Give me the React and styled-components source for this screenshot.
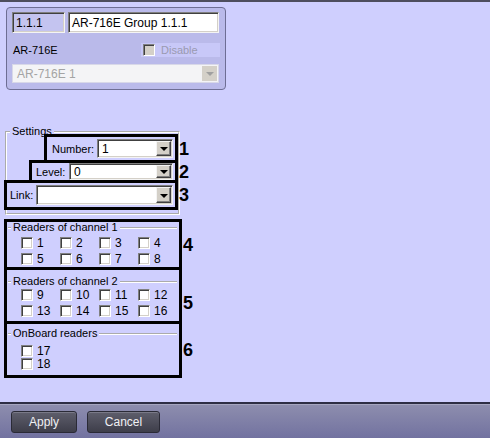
import React from 'react';
import styled, { createGlobalStyle } from 'styled-components';

const GlobalStyle = createGlobalStyle`
  * { box-sizing: border-box; }
  html, body { margin: 0; padding: 0; }
  body {
    background: #cfcffe;
    font-family: "Liberation Sans", Arial, sans-serif;
    font-size: 11px;
    color: #000;
  }
`;

const Page = styled.div`
  width: 490px;
  height: 438px;
  display: flex;
  flex-direction: column;
  border-top: 2px solid #4e4e5e;
  background: #cfcffe;
`;

const Main = styled.div`
  flex: 1;
  display: flex;
  flex-direction: column;
  align-items: flex-start;
`;

/* ---------- object panel ---------- */
const ObjectPanel = styled.div`
  margin: 5px 0 0 6px;
  width: 220px;
  height: 83px;
  padding: 4px 6px 0 5px;
  background: #babaea;
  border: 1px solid #6e6e94;
  border-radius: 4px;
  display: flex;
  flex-direction: column;
`;

const PanelRow = styled.div`
  display: flex;
  align-items: center;
  gap: ${p => p.$gap || 0}px;
  margin-top: ${p => p.$mt || 0}px;
  height: ${p => p.$h}px;
  justify-content: ${p => p.$between ? 'space-between' : 'flex-start'};
`;

const Edit = styled.div`
  width: ${p => (p.$w ? `${p.$w}px` : 'auto')};
  flex: ${p => (p.$w ? 'none' : 1)};
  height: 21px;
  padding: 0 3px;
  display: flex;
  align-items: center;
  font-size: 12px;
  background: ${p => (p.$readonly ? '#c4c4f0' : '#fff')};
  border: 1px solid;
  border-color: #808080 #f4f4f4 #f4f4f4 #808080;
  box-shadow: inset 1px 1px 0 #404040, inset -1px -1px 0 #d4d0c8;
`;

const PanelLabel = styled.span`
  font-size: 11px;
  padding-left: 1px;
`;

const DisableBox = styled.label`
  width: 79px;
  height: 14px;
  margin-right: -1px;
  background: #c8c8f8;
  display: flex;
  align-items: center;
  gap: 6px;
  padding-left: 2px;
  color: #9a9ab0;
  font-size: 11px;
`;

const Check = styled.span`
  display: inline-block;
  flex: none;
  width: 12px;
  height: 12px;
  background: ${p => (p.$disabled ? '#d4d0c8' : '#fff')};
  border: 1px solid;
  border-color: #808080 #ffffff #ffffff #808080;
  box-shadow: inset 1px 1px 0 #404040, inset -1px -1px 0 #d4d0c8;
`;

/* ---------- combo ---------- */
const Combo = styled.div`
  display: flex;
  align-items: stretch;
  width: ${p => (p.$w ? `${p.$w}px` : '100%')};
  height: ${p => p.$h || 19}px;
  background: ${p => (p.$disabled ? '#f4f4f6' : '#fff')};
  border: 1px solid;
  border-color: ${p => (p.$disabled ? '#d8d8e8' : '#808080 #f4f4f4 #f4f4f4 #808080')};
  box-shadow: ${p => (p.$disabled ? 'none' : 'inset 1px 1px 0 #404040, inset -1px -1px 0 #d4d0c8')};
  padding: 1px;
  margin-left: auto;
`;

const ComboText = styled.span`
  flex: 1;
  display: flex;
  align-items: center;
  padding-left: 3px;
  font-size: 12px;
  color: ${p => (p.$disabled ? '#a4a4a4' : '#000')};
`;

const ComboButton = styled.span`
  width: 15px;
  flex: none;
  background: #d4d0c8;
  border: 1px solid;
  border-color: ${p => (p.$disabled ? '#d4d0c8' : '#f4f4f4 #404040 #404040 #f4f4f4')};
  box-shadow: ${p => (p.$disabled ? 'none' : 'inset -1px -1px 0 #808080')};
  display: flex;
  align-items: center;
  justify-content: center;

  &::after {
    content: '';
    border-left: 4px solid transparent;
    border-right: 4px solid transparent;
    border-top: 4px solid ${p => (p.$disabled ? '#a0a0a0' : '#000')};
    margin-top: 1px;
  }
`;

const ComboBox = ({ value, w, h, disabled }) => (
  <Combo $w={w} $h={h} $disabled={disabled}>
    <ComboText $disabled={disabled}>{value}</ComboText>
    <ComboButton $disabled={disabled} />
  </Combo>
);

/* ---------- groups ---------- */
const SettingsGroup = styled.fieldset`
  margin: 35px 0 0 5px;
  width: 175px;
  padding: 0 0 3px 0;
  border: 2px groove #ffffff;
  min-width: 0;
`;

const Legend = styled.legend`
  margin-left: ${p => p.$ml || 3}px;
  padding: 0 2px;
  font-size: 11px;
  line-height: 13px;
  height: 13px;
`;

const FieldRows = styled.div`
  display: flex;
  flex-direction: column;
  align-items: flex-end;
  margin-top: -4px;
`;

const MarkBox = styled.div`
  position: relative;
  width: ${p => p.$w}px;
  height: ${p => p.$h}px;
  border: 3px solid #000;
  display: flex;
  align-items: center;
  padding: 0 2px 0 ${p => p.$pl || 4}px;
  & + & { margin-top: -3px; }
`;

const Marker = styled.span`
  position: absolute;
  left: 100%;
  margin-left: ${p => p.$ml || 2}px;
  top: 50%;
  transform: translateY(calc(-50% + ${p => p.$dy || 0}px));
  font-size: 18px;
  font-weight: bold;
  line-height: 1;
`;

const FieldLabel = styled.span`
  font-size: 11px;
  white-space: nowrap;
`;

const ReaderBox = styled.div`
  position: relative;
  margin: ${p => p.$mt || 0}px 0 0 4px;
  width: 178px;
  height: ${p => p.$h}px;
  border: 3px solid #000;
  padding-top: ${p => p.$pt || 0}px;
`;

const ReaderGroup = styled.fieldset`
  margin: ${p => p.$top || 0}px 2px 0 1px;
  padding: 0;
  border: none;
  border-top: 2px groove #ffffff;
  min-width: 0;
`;

const CheckGrid = styled.div`
  display: grid;
  grid-template-columns: repeat(${p => p.$cols}, 39px);
  row-gap: ${p => p.$gap}px;
  margin-top: ${p => p.$mt}px;
  padding-left: 13px;
`;

const CheckItem = styled.label`
  display: flex;
  align-items: center;
  gap: 4px;
  height: 12px;
  font-size: 12px;
  line-height: 12px;
`;

/* ---------- footer ---------- */
const Footer = styled.div`
  height: 36px;
  border-top: 2px solid #2e2e44;
  box-shadow: inset 0 1px 0 #a6a6c0;
  background: linear-gradient(#8e8eae, #7272a0);
  display: flex;
  gap: 10px;
  padding: 7px 0 0 11px;
`;

const Button = styled.button`
  width: ${p => p.$w}px;
  height: 22px;
  border: 1px solid #2a2a36;
  border-radius: 3px;
  background: linear-gradient(#5e5e6c, #3e3e4a);
  box-shadow: inset 0 1px 0 #7a7a88;
  color: #f0f0f4;
  font-family: "Liberation Sans", Arial, sans-serif;
  font-size: 12px;
  padding: 0;
`;

const Reader = ({ n }) => (
  <CheckItem>
    <Check />
    {n}
  </CheckItem>
);

export default function App() {
  return (
    <>
      <GlobalStyle />
      <Page>
        <Main>
          <ObjectPanel>
            <PanelRow $h={21} $gap={3}>
              <Edit $w={53} $readonly>1.1.1</Edit>
              <Edit>AR-716E Group 1.1.1</Edit>
            </PanelRow>
            <PanelRow $h={14} $mt={10} $between>
              <PanelLabel>AR-716E</PanelLabel>
              <DisableBox>
                <Check $disabled />
                Disable
              </DisableBox>
            </PanelRow>
            <PanelRow $h={19} $mt={7}>
              <ComboBox value="AR-716E 1" disabled />
            </PanelRow>
          </ObjectPanel>

          <SettingsGroup>
            <Legend $ml={3}>Settings</Legend>
            <FieldRows>
              <MarkBox $w={134} $h={29} $pl={5}>
                <FieldLabel>Number:</FieldLabel>
                <ComboBox value="1" w={76} />
                <Marker $ml={4}>1</Marker>
              </MarkBox>
              <MarkBox $w={149} $h={23}>
                <FieldLabel>Level:</FieldLabel>
                <ComboBox value="0" w={104} h={17} />
                <Marker $ml={4}>2</Marker>
              </MarkBox>
              <MarkBox $w={174} $h={30} $pl={3}>
                <FieldLabel>Link:</FieldLabel>
                <ComboBox value="" w={137} h={20} />
                <Marker $ml={4}>3</Marker>
              </MarkBox>
            </FieldRows>
          </SettingsGroup>

          <ReaderBox $mt={4} $h={51}>
            <ReaderGroup $top={-1}>
              <Legend>Readers of channel 1</Legend>
              <CheckGrid $cols={4} $gap={4} $mt={3}>
                {[1, 2, 3, 4, 5, 6, 7, 8].map(n => <Reader key={n} n={n} />)}
              </CheckGrid>
            </ReaderGroup>
            <Marker $ml={4}>4</Marker>
          </ReaderBox>

          <ReaderBox $mt={-3} $h={57}>
            <ReaderGroup $top={5}>
              <Legend>Readers of channel 2</Legend>
              <CheckGrid $cols={4} $gap={4} $mt={1}>
                {[9, 10, 11, 12, 13, 14, 15, 16].map(n => <Reader key={n} n={n} />)}
              </CheckGrid>
            </ReaderGroup>
            <Marker $ml={4} $dy={7}>5</Marker>
          </ReaderBox>

          <ReaderBox $mt={-3} $h={57}>
            <ReaderGroup $top={3}>
              <Legend>OnBoard readers</Legend>
              <CheckGrid $cols={1} $gap={1} $mt={5}>
                <Reader n={17} />
                <Reader n={18} />
              </CheckGrid>
            </ReaderGroup>
            <Marker $ml={4}>6</Marker>
          </ReaderBox>
        </Main>

        <Footer>
          <Button $w={66}>Apply</Button>
          <Button $w={73}>Cancel</Button>
        </Footer>
      </Page>
    </>
  );
}
